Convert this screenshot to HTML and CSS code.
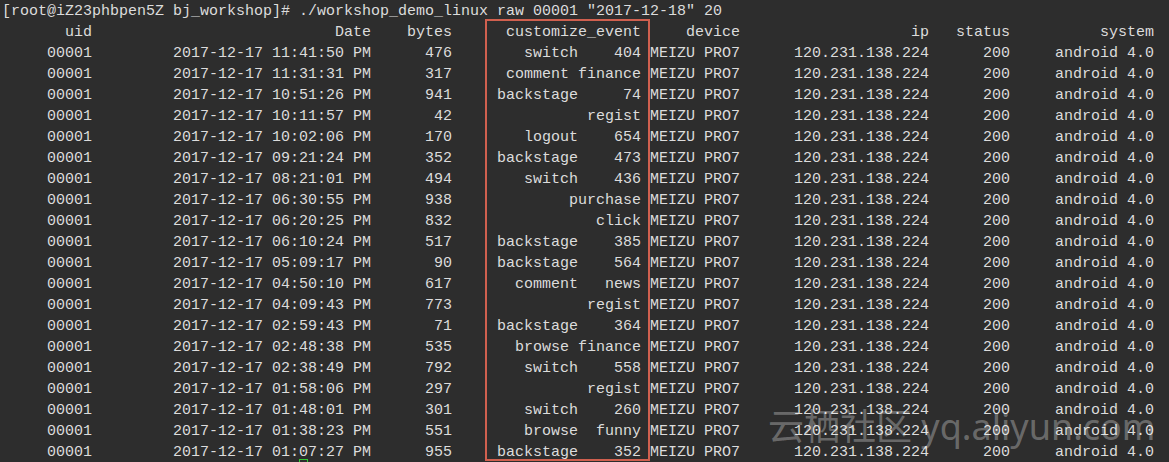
FILE: index.html
```html
<!DOCTYPE html>
<html lang="en">
<head>
<meta charset="utf-8">
<title>terminal</title>
<link rel="stylesheet" href="styles.css">
</head>
<body>
<div class="term">
  <div class="cmd">[root@iZ23phbpen5Z bj_workshop]# ./workshop_demo_linux raw 00001 "2017-12-18" 20</div>
  <div class="row"><span>uid</span><span>Date</span><span>bytes</span><span>customize_event</span><span>device</span><span>ip</span><span>status</span><span>system</span></div>
  <div class="row"><span>00001</span><span>2017-12-17 11:41:50 PM</span><span>476</span><span class="ev"><i>switch</i><b>404</b></span><span>MEIZU PRO7</span><span>120.231.138.224</span><span>200</span><span>android 4.0</span></div>
  <div class="row"><span>00001</span><span>2017-12-17 11:31:31 PM</span><span>317</span><span>comment finance</span><span>MEIZU PRO7</span><span>120.231.138.224</span><span>200</span><span>android 4.0</span></div>
  <div class="row"><span>00001</span><span>2017-12-17 10:51:26 PM</span><span>941</span><span class="ev"><i>backstage</i><b>74</b></span><span>MEIZU PRO7</span><span>120.231.138.224</span><span>200</span><span>android 4.0</span></div>
  <div class="row"><span>00001</span><span>2017-12-17 10:11:57 PM</span><span>42</span><span>regist</span><span>MEIZU PRO7</span><span>120.231.138.224</span><span>200</span><span>android 4.0</span></div>
  <div class="row"><span>00001</span><span>2017-12-17 10:02:06 PM</span><span>170</span><span class="ev"><i>logout</i><b>654</b></span><span>MEIZU PRO7</span><span>120.231.138.224</span><span>200</span><span>android 4.0</span></div>
  <div class="row"><span>00001</span><span>2017-12-17 09:21:24 PM</span><span>352</span><span class="ev"><i>backstage</i><b>473</b></span><span>MEIZU PRO7</span><span>120.231.138.224</span><span>200</span><span>android 4.0</span></div>
  <div class="row"><span>00001</span><span>2017-12-17 08:21:01 PM</span><span>494</span><span class="ev"><i>switch</i><b>436</b></span><span>MEIZU PRO7</span><span>120.231.138.224</span><span>200</span><span>android 4.0</span></div>
  <div class="row"><span>00001</span><span>2017-12-17 06:30:55 PM</span><span>938</span><span>purchase</span><span>MEIZU PRO7</span><span>120.231.138.224</span><span>200</span><span>android 4.0</span></div>
  <div class="row"><span>00001</span><span>2017-12-17 06:20:25 PM</span><span>832</span><span>click</span><span>MEIZU PRO7</span><span>120.231.138.224</span><span>200</span><span>android 4.0</span></div>
  <div class="row"><span>00001</span><span>2017-12-17 06:10:24 PM</span><span>517</span><span class="ev"><i>backstage</i><b>385</b></span><span>MEIZU PRO7</span><span>120.231.138.224</span><span>200</span><span>android 4.0</span></div>
  <div class="row"><span>00001</span><span>2017-12-17 05:09:17 PM</span><span>90</span><span class="ev"><i>backstage</i><b>564</b></span><span>MEIZU PRO7</span><span>120.231.138.224</span><span>200</span><span>android 4.0</span></div>
  <div class="row"><span>00001</span><span>2017-12-17 04:50:10 PM</span><span>617</span><span class="ev"><i>comment</i><b>news</b></span><span>MEIZU PRO7</span><span>120.231.138.224</span><span>200</span><span>android 4.0</span></div>
  <div class="row"><span>00001</span><span>2017-12-17 04:09:43 PM</span><span>773</span><span>regist</span><span>MEIZU PRO7</span><span>120.231.138.224</span><span>200</span><span>android 4.0</span></div>
  <div class="row"><span>00001</span><span>2017-12-17 02:59:43 PM</span><span>71</span><span class="ev"><i>backstage</i><b>364</b></span><span>MEIZU PRO7</span><span>120.231.138.224</span><span>200</span><span>android 4.0</span></div>
  <div class="row"><span>00001</span><span>2017-12-17 02:48:38 PM</span><span>535</span><span>browse finance</span><span>MEIZU PRO7</span><span>120.231.138.224</span><span>200</span><span>android 4.0</span></div>
  <div class="row"><span>00001</span><span>2017-12-17 02:38:49 PM</span><span>792</span><span class="ev"><i>switch</i><b>558</b></span><span>MEIZU PRO7</span><span>120.231.138.224</span><span>200</span><span>android 4.0</span></div>
  <div class="row"><span>00001</span><span>2017-12-17 01:58:06 PM</span><span>297</span><span>regist</span><span>MEIZU PRO7</span><span>120.231.138.224</span><span>200</span><span>android 4.0</span></div>
  <div class="row"><span>00001</span><span>2017-12-17 01:48:01 PM</span><span>301</span><span class="ev"><i>switch</i><b>260</b></span><span>MEIZU PRO7</span><span>120.231.138.224</span><span>200</span><span>android 4.0</span></div>
  <div class="row"><span>00001</span><span>2017-12-17 01:38:23 PM</span><span>551</span><span class="ev"><i>browse</i><b>funny</b></span><span>MEIZU PRO7</span><span>120.231.138.224</span><span>200</span><span>android 4.0</span></div>
  <div class="row"><span>00001</span><span>2017-12-17 01:07:27 PM</span><span>955</span><span class="ev"><i>backstage</i><b>352</b></span><span>MEIZU PRO7</span><span>120.231.138.224</span><span>200</span><span>android 4.0</span></div>
</div>
<div class="highlight"></div>
<div class="cursor"></div>
<div class="watermark">云栖社区 yq.aliyun.com</div>
</body>
</html>
```
FILE: styles.css
```css
html, body {
  margin: 0;
  padding: 0;
  background: #2d2d2d;
  overflow: hidden;
}
body {
  width: 1169px;
  height: 462px;
  position: relative;
}
.term {
  padding: 1px 0 0 2px;
  font-family: "Liberation Mono", monospace;
  font-size: 15px;
  line-height: 21px;
  color: #dcdcdc;
}
.cmd {
  white-space: pre;
}
.row {
  display: grid;
  grid-template-columns: 10ch 31ch 9ch 21ch 11ch 21ch 9ch 16ch;
}
.row > span {
  text-align: right;
  white-space: pre;
}
.ev {
  display: flex;
  justify-content: flex-end;
}
.ev i, .ev b {
  font-style: normal;
  font-weight: normal;
}
.ev b {
  width: 7ch;
  text-align: right;
}
.highlight {
  position: absolute;
  left: 485px;
  top: 19px;
  width: 161px;
  height: 438px;
  border: 2px solid #d0604f;
}
.cursor {
  position: absolute;
  left: 299px;
  top: 459px;
  width: 7px;
  height: 7px;
  border: 1px solid #33cc33;
}
.watermark {
  position: absolute;
  left: 768px;
  top: 403px;
  font-family: "Noto Sans", "Noto Sans CJK SC", sans-serif;
  font-size: 36px;
  line-height: 48px;
  color: rgba(255, 255, 255, 0.3);
  white-space: nowrap;
}
```
